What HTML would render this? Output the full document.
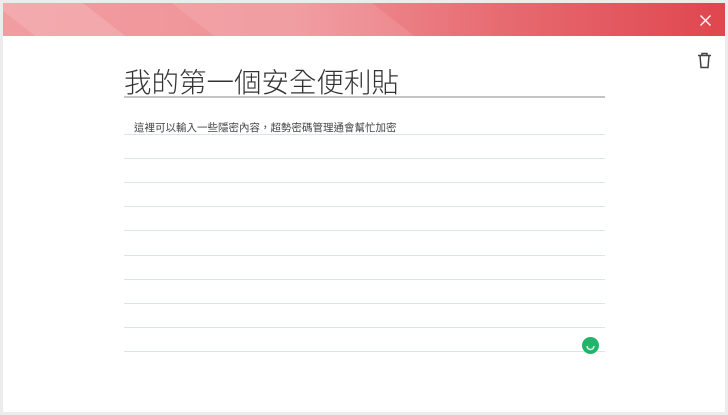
<!DOCTYPE html>
<html><head><meta charset="utf-8"><style>
body{margin:0;width:728px;height:415px;background:#ececec;position:relative;overflow:hidden;font-family:"Liberation Sans","Noto Sans CJK TC",sans-serif}
.win{position:absolute;left:3px;top:3px;width:722px;height:409px;background:#fff}
.hdr{position:absolute;left:0;top:0;width:722px;height:33px;background:linear-gradient(90deg,#f19da0 0%,#f09398 40%,#e66a70 70%,#e0464e 100%);overflow:hidden}
.hdr .s1{position:absolute;left:-10px;top:0;width:90px;height:33px;background:rgba(255,255,255,.15);transform:skewX(52deg);transform-origin:0 0}
.hdr .s2{position:absolute;left:190px;top:0;width:200px;height:33px;background:rgba(255,255,255,.1);transform:skewX(52deg)}
.title{position:absolute;left:124px;top:60px;font-size:27.5px;color:#333;font-weight:300}
.ul{position:absolute;left:124px;top:96px;width:481px;height:2px;background:#c4c4c4}
.txt{position:absolute;left:134px;top:120px;font-size:10.5px;color:#444}
.ln{position:absolute;left:124px;width:481px;height:1px;background:#d6e6ef}
.ok{position:absolute;left:582px;top:337px;width:17px;height:17px;border-radius:50%;background:#22b46a}
</style></head><body>
<div class="win">
<div class="hdr"><div class="s1"></div><div class="s2"></div>
<svg style="position:absolute;left:697px;top:12px" width="11" height="11" viewBox="0 0 11 11" stroke="#fff" stroke-width="1.3"><path d="M0.5 0.5l10 10M10.5 0.5l-10 10"/></svg></div>
<svg style="position:absolute;left:694px;top:49px" width="15" height="17" viewBox="0 0 15 17" fill="none" stroke="#444" stroke-width="1.5"><path d="M1 3.5h13M5 3.5V1.5h5v2M3 3.5l1 12h7l1-12"/></svg>
</div>
<div class="title">我的第一個安全便利貼</div>
<div class="ul"></div>
<div class="txt">這裡可以輸入一些隱密內容，超勢密碼管理通會幫忙加密</div>
<div class="ln" style="top:134px"></div>
<div class="ln" style="top:158px"></div>
<div class="ln" style="top:182px"></div>
<div class="ln" style="top:206px"></div>
<div class="ln" style="top:230px"></div>
<div class="ln" style="top:255px"></div>
<div class="ln" style="top:279px"></div>
<div class="ln" style="top:303px"></div>
<div class="ln" style="top:327px"></div>
<div class="ln" style="top:351px"></div>
<div class="ok"><svg width="17" height="17" viewBox="0 0 17 17"><path d="M5 9a3.5 3.5 0 0 0 7 0" fill="none" stroke="#dff5ea" stroke-width="1.5"/></svg></div>
</body></html>
